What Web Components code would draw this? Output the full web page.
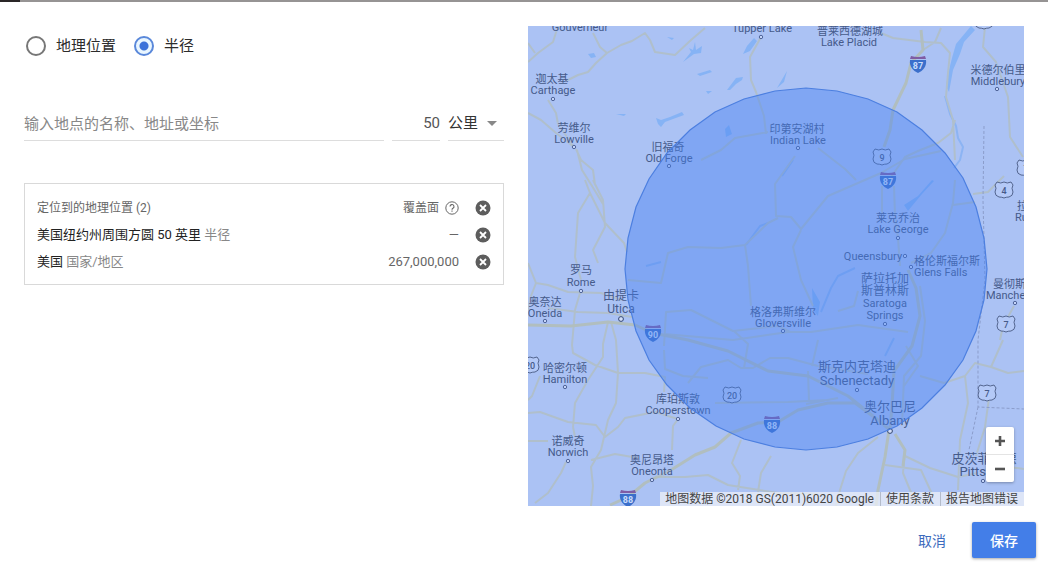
<!DOCTYPE html>
<html lang="zh-CN">
<head>
<meta charset="UTF-8">
<meta name="viewport" content="width=device-width, initial-scale=1">
<title>地理位置定位</title>
<style>
  body {
    margin: 0;
    background: #fff;
    color: #333;
    font-family: Roboto, "Noto Sans CJK SC", sans-serif;
    font-size: 13px;
  }
</style>
</head>
<body>
<targeting-panel>
  <mode-picker></mode-picker>
  <radius-form></radius-form>
  <target-list></target-list>
  <radius-map slot="map"></radius-map>
  <action-button slot="actions">取消</action-button>
  <action-button slot="actions" primary>保存</action-button>
</targeting-panel>

<script>
class TargetingPanel extends HTMLElement {
  constructor() {
    super();
    this.attachShadow({ mode: "open" }).innerHTML = `
      <style>
        :host { display: block; }
        .strip {
          height: 2px;
          background: linear-gradient(to right, #2a2627 20px, #969494 20px);
        }
        .body {
          display: grid;
          grid-template-columns: minmax(0, 30fr) minmax(0, 31fr);
          gap: 24px;
          padding: 24px 24px 16px;
        }
        footer {
          display: flex;
          justify-content: flex-end;
          gap: 8px;
          padding: 0 12px 6px;
        }
      </style>
      <div class="strip"></div>
      <div class="body">
        <section><slot></slot></section>
        <slot name="map"></slot>
      </div>
      <footer><slot name="actions"></slot></footer>
    `;
  }
}

class ModePicker extends HTMLElement {
  constructor() {
    super();
    this.attachShadow({ mode: "open" }).innerHTML = `
      <style>
        :host { display: flex; gap: 18px; padding: 8px 2px 0; }
        label {
          display: flex;
          align-items: center;
          gap: 10px;
          height: 24px;
          font-size: 15px;
          line-height: 20px;
          color: #2c2c2c;
        }
        input {
          appearance: none;
          box-sizing: border-box;
          width: 20px;
          height: 20px;
          margin: 0;
          border: 2px solid #777;
          border-radius: 50%;
          background: #fff;
        }
        input:checked {
          border-color: #5a88da;
          background: radial-gradient(circle, #3b72d9 4px, #e9f6ff 5px);
        }
      </style>
      <label><input type="radio" name="mode">地理位置</label>
      <label><input type="radio" name="mode" checked>半径</label>
    `;
  }
}

class RadiusForm extends HTMLElement {
  constructor() {
    super();
    this.attachShadow({ mode: "open" }).innerHTML = `
      <style>
        :host {
          display: grid;
          grid-template-columns: 1fr 48px 56px;
          gap: 8px;
          padding-top: 48px;
        }
        input, select {
          box-sizing: border-box;
          width: 100%;
          height: 35px;
          margin: 0;
          padding: 0;
          border: 0;
          border-bottom: 1px solid #ddd;
          border-radius: 0;
          outline: 0;
          background: none;
          font: inherit;
          font-size: 15px;
          color: #333;
          appearance: none;
        }
        input { padding-top: 2px; }
        input::placeholder { color: #888; opacity: 1; }
        .amount { padding: 0; text-align: right; color: #555; }
        .unit { display: grid; align-items: center; }
        .unit > * { grid-area: 1 / 1; }
        .unit svg {
          justify-self: end;
          margin-right: 7px;
          pointer-events: none;
        }
      </style>
      <input type="text" aria-label="地点" placeholder="输入地点的名称、地址或坐标">
      <input class="amount" type="text" aria-label="半径" value="50">
      <div class="unit">
        <select aria-label="单位">
          <option>公里</option>
          <option>英里</option>
        </select>
        <svg width="10" height="5"><path d="M0 0h10L5 5z" fill="#888"/></svg>
      </div>
    `;
  }
}

class TargetList extends HTMLElement {
  constructor() {
    super();
    const remove = `
      <button type="button" aria-label="移除">
        <svg width="16" height="16" viewBox="0 0 16 16">
          <circle cx="8" cy="8" r="7.5" fill="#5d5d5d"/>
          <path d="M5 5l6 6M11 5l-6 6" stroke="#fff" stroke-width="1.8"/>
        </svg>
      </button>`;
    this.attachShadow({ mode: "open" }).innerHTML = `
      <style>
        :host {
          display: block;
          margin-top: 42px;
          padding: 10px 12px 9px;
          border: 1px solid #d9d9d9;
        }
        table { width: 100%; border-collapse: collapse; }
        th, td {
          height: 27px;
          padding: 0;
          font-weight: 400;
          text-align: left;
          line-height: 18px;
          color: #222;
        }
        thead th { font-size: 12px; color: #666; }
        .reach { width: 120px; text-align: right; color: #666; }
        .remove { width: 32px; text-align: right; }
        small { font-size: 13px; color: #888; }
        .help { display: inline-flex; align-items: center; gap: 6px; }
        button {
          display: block;
          margin-left: auto;
          padding: 0;
          border: 0;
          background: none;
        }
        svg { display: block; }
      </style>
      <table>
        <thead>
          <tr>
            <th>定位到的地理位置 (2)</th>
            <th class="reach">
              <span class="help">覆盖面
                <svg width="14" height="14" viewBox="0 0 14 14" fill="none" stroke="#666">
                  <circle cx="7" cy="7" r="6.2"/>
                  <path d="M5 5.6a2 2 0 1 1 3 1.7c-.7.4-1 .7-1 1.5M7 9.6v1.2" stroke-width="1.1"/>
                </svg>
              </span>
            </th>
            <td class="remove">${remove}</td>
          </tr>
        </thead>
        <tbody>
          <tr>
            <td>美国纽约州周围方圆 50 英里 <small>半径</small></td>
            <td class="reach">—</td>
            <td class="remove">${remove}</td>
          </tr>
          <tr>
            <td>美国 <small>国家/地区</small></td>
            <td class="reach">267,000,000</td>
            <td class="remove">${remove}</td>
          </tr>
        </tbody>
      </table>
    `;
  }
}

// one row per text line: text, x, baseline, anchor, size
const LABELS = [
  ["Gouverneur", 52, 5],
  ["Tupper Lake", 234, 6],
  ["普莱西德湖城", 322, 9], ["Lake Placid", 321, 20],
  ["迦太基", 24, 57], ["Carthage", 25, 68],
  ["劳维尔", 46, 106], ["Lowville", 46, 117],
  ["旧福奇", 140, 125], ["Old Forge", 141, 136],
  ["印第安湖村", 269, 107], ["Indian Lake", 270, 118],
  ["米德尔伯里", 470, 48], ["Middlebury", 470, 59],
  ["罗马", 53, 248], ["Rome", 53, 260],
  ["由提卡", 93, 274, "middle", 12], ["Utica", 93, 287, "middle", 12],
  ["奥奈达", 17, 280], ["Oneida", 17, 291],
  ["莱克乔治", 370, 196], ["Lake George", 370, 207],
  ["Queensbury", 345, 234],
  ["格伦斯福尔斯", 386, 239, "start"], ["Glens Falls", 386, 250, "start"],
  ["萨拉托加", 357, 257, "middle", 12], ["斯普林斯", 357, 269, "middle", 12],
  ["Saratoga", 357, 281], ["Springs", 357, 293],
  ["格洛弗斯维尔", 255, 290], ["Gloversville", 255, 301],
  ["拉特兰", 489, 184, "start"], ["Rutland", 487, 195, "start"],
  ["曼彻斯特", 487, 262], ["Manchester", 487, 273],
  ["哈密尔顿", 37, 346], ["Hamilton", 37, 357],
  ["库珀斯敦", 150, 377], ["Cooperstown", 150, 388],
  ["诺威奇", 40, 419], ["Norwich", 40, 430],
  ["奥尼昂塔", 124, 438], ["Oneonta", 124, 449],
  ["斯克内克塔迪", 329, 345, "middle", 13], ["Schenectady", 329, 359, "middle", 13],
  ["奥尔巴尼", 362, 385, "middle", 13], ["Albany", 362, 399, "middle", 13],
  ["皮茨菲尔德", 456, 437, "middle", 13], ["Pittsfield", 457, 450, "middle", 13],
];

const TOWNS = [
  [233, 11], [25, 73], [46, 121], [141, 140], [270, 122], [469, 63],
  [53, 265], [17, 295], [370, 212], [377, 230], [383, 241], [357, 298],
  [255, 305], [487, 277], [37, 361], [150, 393], [40, 435], [124, 454],
  [329, 364], [455, 455],
];

const CITIES = [[93, 293], [362, 405]];

const INTERSTATES = [["87", 390, 38], ["87", 360, 154], ["90", 125, 307], ["88", 244, 398], ["88", 100, 472]];

const ROUTES = [
  ["9", 354, 131], ["4", 476, 164], ["7", 478, 298], ["7", 459, 367],
  ["20", 204, 369], ["20", 2, 339], ["7", 456, -5], ["7", 498, 142],
];

const ROADS = `
  M30 0L25 16L10 27L0 36M0 17L7 27
  M65 7L72 21L79 27L93 19L104 15L117 7L122 14L127 26L147 29L163 14L177 2
  M79 27L68 37L60 46L50 49L38 55
  M20 74L28 87L30 98L46 121M0 87L13 94L28 107L46 121
  M48 123L53 134L65 144L67 159M49 124L54 144L64 160L75 178
  M57 154L62 167L50 187L47 231L53 254M62 167L77 197L96 217L99 226
  M65 154L75 174L77 201L65 224L70 237
  M233 11L222 31L223 54L228 66L236 90L238 108
  M353 7L365 12L397 16L413 17L422 27L420 47L418 71L425 94L427 134
  M413 2L407 16L395 24M457 1L455 21L468 36L480 71L482 111L495 131
  M427 94L423 107L410 117L390 125L377 131L363 151
  M0 237L8 257L20 259L40 266L73 267L93 274
  M8 257L3 270L0 284M20 282L50 286L80 287L104 291
  M52 267L47 284L44 319L45 327L67 339L90 347L117 347L137 351L136 366
  M80 296L75 318L75 331L60 354L47 377L45 401
  M83 296L88 314L90 347L88 377L80 394L73 424L63 441L65 460L63 480
  M0 387L12 386L40 396L68 399L77 411L90 401L97 392L127 386L150 393L145 400L144 424
  M45 401L47 411M38 436L33 447L20 467L7 477M0 415L20 415
  M63 434L87 428L110 432M12 350L4 370L0 374
  M127 451L157 451L180 449L200 459L250 467L290 468
  M213 414L204 437L212 450L210 464M243 430L233 447L230 466
  M350 411L330 427L318 445L312 464L308 480
  M377 430L402 442L430 451L450 447M357 439L393 444L405 470
  M377 424L375 447L382 464L390 480M416 357L437 350L440 377L432 414L430 464
  M475 314L463 341L480 347L496 345M463 341L447 337L437 350L416 357L392 350
  M461 372L457 401L448 430M475 440L496 443M486 280L475 300L472 314
  M267 130L247 158L248 190L263 191L273 203L300 170L330 157L353 147L377 133L413 125
  M290 122L317 143L328 154M173 134L193 124L207 112L240 106
  M273 204L265 221L273 254L285 280
  M100 254L133 257L140 227L160 221L193 222L217 219L240 197L250 192
  M217 219L220 240L223 280M136 320L138 286L163 284L177 291L205 305L250 300L262 306
  M136 308L205 314L260 306L283 306L330 299L380 306
  M160 357L173 341L200 334L213 342L225 342L242 332L260 332L290 340L340 348
  M354 160L354 188M366 160L367 190L370 212L372 240
  M427 154L425 177L417 207L403 227L383 237
  M425 179L447 176M445 168L460 166L476 150
  M280 345L281 375M278 378L310 372M378 320L390 340L376 360
  M392 260L397 295L393 330L376 350L374 400M330 265L326 280L310 285
  M136 324L137 343L155 350L180 352M290 314L284 340M206 305L220 318L216 342
  M187 377L260 376L300 374
`;

const HIGHWAYS = `
  M393 4L395 24L383 37L378 57L365 84L362 104L356 121
  M380 244L388 262L392 290L384 320L366 345L364 380L362 404
  M0 299L43 300L80 296L107 299L125 307L160 314L200 325L240 345L280 350L320 370L350 394L362 404
  M82 479L100 471L117 457L143 444L167 429L187 421L203 407L230 397L250 396L270 384L300 377L327 377L350 394
  M361 404L357 431L350 464L348 480M367 408L377 424L375 440
`;

const RIVERS = `
  M417 70L422 88L428 100L430 112L435 121L432 134L426 142
  M293 286L303 262L310 250L327 242
  M240 197L232 200L218 219M133 236L118 240M265 134L254 150
  M357 330L362 320L366 312
`;

const LAKES = `
  M443 0L428 18L424 32L421 44L418 60L421 66L425 44L432 28L436 16L447 4z
  M155 36L163 26L161 22L165 24L167 16L168 24L174 20L173 27L166 28z
  M169 48L182 44L184 46L172 50z
  M199 64L205 56L208 52L215 51L214 54L208 58L202 64z
  M128 92L133 94L142 91L154 86L156 89L145 93L137 96L133 101L130 98z
  M215 28L219 20L226 12L229 15L222 25z
  M60 28L66 27L68 31L63 32zM178 65L184 65L180 68zM197 103L201 99L204 108L198 111z
  M139 11L146 12L144 14zM88 88L98 88L96 90zM249 62L259 45L256 56z
  M376 179L390 170L404 154L406 155L394 168L384 180L380 185z
  M284 262L292 276L290 290L285 284z
`;

class RadiusMap extends HTMLElement {
  constructor() {
    super();
    this.attachShadow({ mode: "open" });
  }

  connectedCallback() {
    this.render();
  }

  radiusPoints(cx, cy, r) {
    const points = [];
    for (let a = 0; a < 360; a += 10) {
      const t = (a * Math.PI) / 180;
      points.push(`${Math.round(cx + r * Math.cos(t))},${Math.round(cy + r * Math.sin(t))}`);
    }
    return points.join(" ");
  }

  render() {
    const labels = LABELS.map(([text, x, y, anchor = "middle", size = 11]) =>
      `<text x="${x}" y="${y}" text-anchor="${anchor}" font-size="${size}">${text}</text>`
    ).join("");
    const towns = TOWNS.map(([x, y]) => `<circle cx="${x}" cy="${y}" r="1.7"/>`).join("");
    const cities = CITIES.map(([x, y]) => `<circle cx="${x}" cy="${y}" r="2.4"/>`).join("");
    const interstates = INTERSTATES.map(([n, x, y]) => `
      <g transform="translate(${x} ${y})">
        <path d="M-7-8Q0-6 7-8L8-5H-8z" fill="#7f5ca4"/>
        <path d="M-8-4H8C9 2 5 7 0 9C-5 7-9 2-8-4z" fill="#3b6fcb"/>
        <text y="5" text-anchor="middle" font-size="9" font-weight="700" fill="#c9dcfb">${n}</text>
      </g>`).join("");
    const routes = ROUTES.map(([n, x, y]) => `
      <g transform="translate(${x} ${y})">
        <path d="M-7-8Q-3-6 0-8Q3-6 7-8L9-5Q7-2 9 2Q9 6 5 7Q2 7 0 8Q-2 7-5 7Q-9 6-9 2Q-7-2-9-5z"
          fill="#b4c9f7" stroke="#53658f"/>
        <text y="4" text-anchor="middle" font-size="9" font-weight="500" fill="#465a89">${n}</text>
      </g>`).join("");

    this.shadowRoot.innerHTML = `
      <style>
        :host {
          display: block;
          position: relative;
          height: 480px;
          overflow: hidden;
          background: #abc2f4;
        }
        .canvas { display: block; width: 100%; height: 100%; }
        .zoom {
          position: absolute;
          right: 10px;
          bottom: 24px;
          width: 28px;
          border-radius: 2px;
          background: #fff;
          box-shadow: 0 1px 3px rgba(0, 0, 0, .3);
        }
        button {
          display: grid;
          place-items: center;
          width: 28px;
          height: 27px;
          padding: 0;
          border: 0;
          background: none;
        }
        button + button { border-top: 1px solid #e4e4e4; height: 28px; }
        .credit {
          position: absolute;
          right: 0;
          bottom: 0;
          display: flex;
          height: 14px;
          background: rgba(240, 243, 248, .72);
          font-size: 12px;
          line-height: 14px;
          color: #444;
        }
        .credit > * { padding: 0 6px 0 5px; color: inherit; text-decoration: none; }
        .credit a { border-left: 1px solid #b4bccb; }
      </style>
      <svg class="canvas" viewBox="0 0 496 480" preserveAspectRatio="xMidYMid slice" role="img" aria-label="地图">
        <g fill="none" stroke-linejoin="round">
          <path d="${RIVERS}" stroke="#8cb4f3" stroke-width="2"/>
          <path d="${LAKES}" fill="#86b3f5"/>
          <path d="${ROADS}" stroke="#b0bfcb" stroke-width="2"/>
          <path d="${HIGHWAYS}" stroke="#b1bebf" stroke-width="3"/>
          <path d="M456 100L455 174L457 254L450 314V381L496 383M450 381L441 424"
            stroke="#8b9dcb" stroke-dasharray="3 2"/>
        </g>
        ${routes}
        ${interstates}
        <g fill="#455a8a" stroke="#abc2f4" stroke-width="2" stroke-opacity=".4" paint-order="stroke">${labels}</g>
        <g fill="#c4d4f8" stroke="#50659a">${towns}</g>
        <g fill="#d3dffa" stroke="#34466f">${cities}</g>
        <polygon points="${this.radiusPoints(278, 243, 181)}"
          fill="#4480f0" fill-opacity=".42" stroke="#4c7fe0" stroke-width="1.2"/>
      </svg>
      <div class="zoom">
        <button type="button" aria-label="放大">
          <svg width="12" height="12"><path d="M6 1v10M1 6h10" stroke="#555" stroke-width="2.6"/></svg>
        </button>
        <button type="button" aria-label="缩小">
          <svg width="12" height="12"><path d="M1 6h10" stroke="#555" stroke-width="2.6"/></svg>
        </button>
      </div>
      <div class="credit">
        <span>地图数据 ©2018 GS(2011)6020 Google</span>
        <a href="#terms">使用条款</a>
        <a href="#report">报告地图错误</a>
      </div>
    `;
  }
}

class ActionButton extends HTMLElement {
  constructor() {
    super();
    this.attachShadow({ mode: "open" }).innerHTML = `
      <style>
        :host { display: block; }
        button {
          min-width: 64px;
          height: 36px;
          padding: 2px 16px 0;
          border: 0;
          border-radius: 2px;
          background: none;
          font: inherit;
          font-size: 14px;
          line-height: 20px;
          color: #3d6bbd;
        }
        :host([primary]) button {
          background: #437ee8;
          box-shadow: 0 1px 3px rgba(0, 0, 0, .35);
          font-weight: 500;
          color: #fff;
        }
      </style>
      <button type="button"><slot></slot></button>
    `;
  }
}

customElements.define("targeting-panel", TargetingPanel);
customElements.define("mode-picker", ModePicker);
customElements.define("radius-form", RadiusForm);
customElements.define("target-list", TargetList);
customElements.define("radius-map", RadiusMap);
customElements.define("action-button", ActionButton);
</script>
</body>
</html>
